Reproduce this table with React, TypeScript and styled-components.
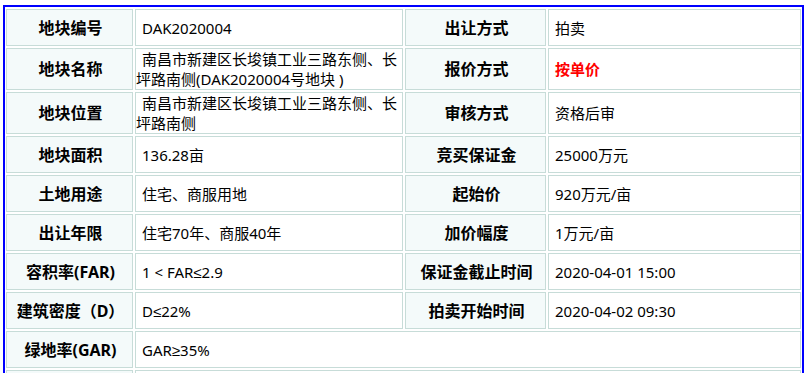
import React from "react";
import styled, { createGlobalStyle } from "styled-components";

const GlobalStyle = createGlobalStyle`
  html, body {
    margin: 0;
    padding: 0;
    background: #ffffff;
  }
  body {
    font-family: "Noto Sans", "Liberation Sans", "Noto Sans CJK SC", sans-serif;
    color: #000;
  }
`;

const Frame = styled.div`
  margin: 5px 0 0 3px;
  width: 796px;
  border: 2px solid #0000ff;
  border-bottom: none;
  padding: 2px 0 0 1px;
  box-sizing: content-box;
`;

const Grid = styled.div`
  display: grid;
  grid-template-columns: 127px 268px 141px 253px;
  gap: 2px;
  width: 795px;
`;

const Cell = styled.div`
  box-sizing: border-box;
  min-height: 37px;
  border: 1px solid #c7dcd8;
  display: flex;
  align-items: center;
`;

const Label = styled(Cell)`
  background: #f4fafa;
  justify-content: center;
  font-size: 16px;
  font-weight: 700;
  line-height: 20px;
  padding-left: 2px;
`;

const Value = styled(Cell)<{ $span?: boolean; $red?: boolean }>`
  background: #ffffff;
  font-size: 15px;
  line-height: 20px;
  padding: 0;
  grid-column: ${(p) => (p.$span ? "2 / span 3" : "auto")};
  color: ${(p) => (p.$red ? "#ff0000" : "#000000")};
  font-weight: ${(p) => (p.$red ? 700 : 400)};
`;

const Text = styled.span`
  display: block;
  text-indent: 6px;
`;

type Row = [string, string, string?, string?, boolean?];

const rows: Row[] = [
  ["地块编号", "DAK2020004", "出让方式", "拍卖"],
  ["地块名称", "南昌市新建区长埈镇工业三路东侧、长坪路南侧(DAK2020004号地块 )", "报价方式", "按单价", true],
  ["地块位置", "南昌市新建区长埈镇工业三路东侧、长坪路南侧", "审核方式", "资格后审"],
  ["地块面积", "136.28亩", "竞买保证金", "25000万元"],
  ["土地用途", "住宅、商服用地", "起始价", "920万元/亩"],
  ["出让年限", "住宅70年、商服40年", "加价幅度", "1万元/亩"],
  ["容积率(FAR)", "1 < FAR≤2.9", "保证金截止时间", "2020-04-01 15:00"],
  ["建筑密度（D）", "D≤22%", "拍卖开始时间", "2020-04-02 09:30"],
];

export default function App() {
  return (
    <>
      <GlobalStyle />
      <Frame>
        <Grid>
          {rows.map(([l1, v1, l2, v2, red]) => (
            <React.Fragment key={l1}>
              <Label>{l1}</Label>
              <Value>
                <Text>{v1}</Text>
              </Value>
              <Label>{l2}</Label>
              <Value $red={red}>
                <Text>{v2}</Text>
              </Value>
            </React.Fragment>
          ))}
          <Label>绿地率(GAR)</Label>
          <Value $span>
            <Text>GAR≥35%</Text>
          </Value>
          <Label></Label>
          <Value $span>
            <Text></Text>
          </Value>
        </Grid>
      </Frame>
    </>
  );
}
